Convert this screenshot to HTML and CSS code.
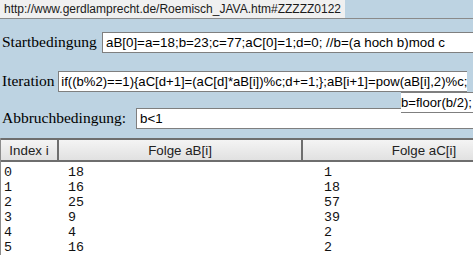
FILE: index.html
```html
<!DOCTYPE html>
<html lang="de">
<head>
    <meta charset="UTF-8">
    <meta name="viewport" content="width=device-width, initial-scale=1.0">
    <title>Roemisch JAVA</title>
    <link rel="stylesheet" href="styles.css">
</head>
<body>
    <div class="status"><span class="url">http://www.gerdlamprecht.de/Roemisch_JAVA.htm#ZZZZZ0122</span></div>

    <form class="form">
        <div class="row row-start">
            <label class="lbl lbl-start">Startbedingung</label>
            <input class="field" type="text" value="aB[0]=a=18;b=23;c=77;aC[0]=1;d=0; //b=(a hoch b)mod c">
        </div>
        <div class="iter"><span class="lbl">Iteration</span>&nbsp;<span class="code"><span class="nw">if((b%2)==1){aC[d+1]=(aC[d]*aB[i])%c;d+=1;};aB[i+1]=pow(aB[i],2)%c;</span><wbr><span class="nw">b=floor(b/2);</span></span></div>
        <div class="row">
            <label class="lbl lbl-stop">Abbruchbedingung:</label>
            <input class="field" type="text" value="b&lt;1">
        </div>
    </form>

    <div class="table">
        <div class="thead">
            <div class="th">Index i</div>
            <div class="th">Folge aB[i]</div>
            <div class="th">Folge aC[i]</div>
        </div>
<pre class="tbody">0	18				1
1	16				18
2	25				57
3	9				39
4	4				2
5	16				2</pre>
    </div>
</body>
</html>
```

FILE: styles.css
```css
html,
body {
    overflow: hidden;
}

body {
    margin: 0;
    height: 255px;
    background: #bdd3e2;
    font-family: "Liberation Sans", Arial, sans-serif;
    font-size: 13.33px;
    color: #000;
}

/* Statuszeile oben */
.status {
    height: 18px;
    border-bottom: 1px solid #8a8a8a;
}

.url {
    display: inline-block;
    box-sizing: border-box;
    width: 345px;
    height: 18px;
    line-height: 18px;
    padding-left: 4px;
    background: #f0f0f0;
    color: #1a1a1a;
    font-size: 12px;
    white-space: nowrap;
    overflow: hidden;
}

.form {
    padding-left: 2px;
}

.row {
    display: flex;
    align-items: baseline;
}

.row > * {
    flex-shrink: 0;
}

.row-start {
    margin-top: 13px;
}

.lbl {
    font-family: "Liberation Serif", "Times New Roman", serif;
    font-size: 15.5px;
}

.lbl-start {
    width: 100px;
}

.lbl-stop {
    width: 134px;
}

.field {
    box-sizing: border-box;
    width: 420px;
    height: 21px;
    margin: 0;
    padding: 0 3px;
    border: 1px solid #7f7f7f;
    background: #fff;
    font: inherit;
    color: #000;
    outline: none;
}

/* Iteration: Text bricht um, zweite Zeile rechtsbuendig */
.iter {
    width: 473px;
    height: 37px;
    margin-top: 18px;
    line-height: 21px;
    text-align: left;
    text-align-last: right;
}

.iter .lbl {
    line-height: 16px;
}

.code {
    position: relative;
    z-index: 1;
    padding: 2px;
    border: 1px solid #7f7f7f;
    background: #fff;
    font-size: 13.1px;
}

.nw {
    white-space: nowrap;
}

/* Tabelle */
.table {
    width: 548px;
    height: 200px;
    margin-top: 9px;
    border-left: 1px solid #8c8c8c;
    background: #fff;
}

.thead {
    display: grid;
    grid-template-columns: 58px 244px 244px;
    box-sizing: border-box;
    height: 24px;
    border-top: 2px solid #6e6e6e;
    border-bottom: 2px solid #6e6e6e;
    background: linear-gradient(#f4f4f4, #e1e1e1);
}

.th {
    padding-top: 1px;
    line-height: 19px;
    text-align: center;
    color: #222;
    border-right: 2px solid #6e6e6e;
}

.tbody {
    margin: 0;
    padding: 3px 0 0 3px;
    font-family: "Liberation Mono", "Courier New", monospace;
    font-size: 13.33px;
    line-height: 15px;
    tab-size: 8;
    color: #111;
}
```
